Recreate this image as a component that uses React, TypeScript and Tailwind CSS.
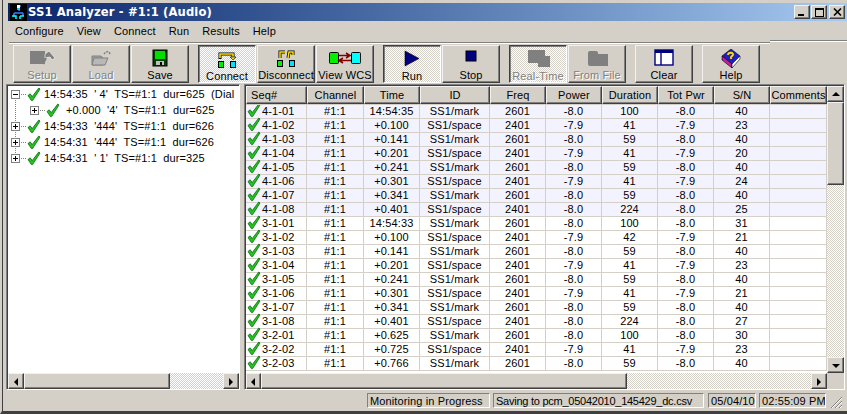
import React from "react";

const FONT = "font-['Liberation_Sans',sans-serif] tracking-[0.12px]";

type Row = [string, string, string, string, string, string, string, string, string];
const m = "SS1/mark", s = "SS1/space", f1 = "2601", f2 = "2401";
const rows: Row[] = [
  ["4-1-01", "14:54:35", m, f1, "-8.0", "100", "-8.0", "40", ""],
  ["4-1-02", "+0.100", s, f2, "-7.9", "41", "-7.9", "23", ""],
  ["4-1-03", "+0.141", m, f1, "-8.0", "59", "-8.0", "40", ""],
  ["4-1-04", "+0.201", s, f2, "-7.9", "41", "-7.9", "20", ""],
  ["4-1-05", "+0.241", m, f1, "-8.0", "59", "-8.0", "40", ""],
  ["4-1-06", "+0.301", s, f2, "-7.9", "41", "-7.9", "24", ""],
  ["4-1-07", "+0.341", m, f1, "-8.0", "59", "-8.0", "40", ""],
  ["4-1-08", "+0.401", s, f2, "-8.0", "224", "-8.0", "25", ""],
  ["3-1-01", "14:54:33", m, f1, "-8.0", "100", "-8.0", "31", ""],
  ["3-1-02", "+0.100", s, f2, "-7.9", "42", "-7.9", "21", ""],
  ["3-1-03", "+0.141", m, f1, "-8.0", "59", "-8.0", "40", ""],
  ["3-1-04", "+0.201", s, f2, "-7.9", "41", "-7.9", "23", ""],
  ["3-1-05", "+0.241", m, f1, "-8.0", "59", "-8.0", "40", ""],
  ["3-1-06", "+0.301", s, f2, "-7.9", "41", "-7.9", "21", ""],
  ["3-1-07", "+0.341", m, f1, "-8.0", "59", "-8.0", "40", ""],
  ["3-1-08", "+0.401", s, f2, "-8.0", "224", "-8.0", "27", ""],
  ["3-2-01", "+0.625", m, f1, "-8.0", "100", "-8.0", "30", ""],
  ["3-2-02", "+0.725", s, f2, "-7.9", "41", "-7.9", "23", ""],
  ["3-2-03", "+0.766", m, f1, "-8.0", "59", "-8.0", "40", ""],
];
const headers = ["Seq#", "Channel", "Time", "ID", "Freq", "Power", "Duration", "Tot Pwr", "S/N", "Comments"];
const COLS = "grid grid-cols-[61px_57px_56px_70px_56px_56px_56px_56px_56px_57px]";

function Check() {
  return (
    <svg width="14" height="15" viewBox="0 0 14 15" className="shrink-0 overflow-visible">
      <path d="M1 8.5 L3.2 6.8 L5.2 9.6 L11.8 1 L13 2 L5.6 13.6 L4.4 13.6 Z" fill="#22c51e" stroke="#0b6b12" strokeWidth="0.8" />
    </svg>
  );
}

function Tri({ dir }: { dir: "l" | "r" | "u" | "d" }) {
  const p = { l: "6,1 6,9 2,5", r: "2,1 2,9 6,5", u: "1,6 9,6 5,2", d: "1,3 9,3 5,7" }[dir];
  return (
    <svg width="9" height="9" viewBox="0 0 9 9"><polygon points={p} fill="#000" /></svg>
  );
}

const RAISED = "bg-[#d4d0c8] border border-t-[#f4f2ee] border-l-[#f4f2ee] border-r-[#404040] border-b-[#404040] shadow-[inset_-1px_-1px_0_#808080]";
const DITHER = "bg-[repeating-conic-gradient(#ffffff_0_25%,#d4d0c8_0_50%)] bg-[length:2px_2px]";

function SBtn({ dir, cls }: { dir: "l" | "r" | "u" | "d"; cls: string }) {
  return <div className={`${RAISED} ${cls} shrink-0 flex items-center justify-center`}><Tri dir={dir} /></div>;
}

function TButton({ label, pressed, disabled, children }: { label: string; pressed?: boolean; disabled?: boolean; children: React.ReactNode }) {
  const base = pressed
    ? `${DITHER} border border-t-[#404040] border-l-[#404040] border-r-white border-b-white shadow-[inset_1px_1px_0_#808080]`
    : RAISED;
  const txt = disabled ? "text-[#808080] [text-shadow:1px_1px_0_#ffffff]" : "text-black";
  return (
    <div className={`${base} w-[58px] h-[38px] shrink-0 flex flex-col items-center ${pressed ? "pt-[4px]" : "pt-[3px]"}`}>
      <div className="h-[19px] flex items-center justify-center">{children}</div>
      <div className={`text-[11px] leading-[14px] whitespace-nowrap ${txt}`}>{label}</div>
    </div>
  );
}

const Ic = ({ children, w = 30 }: { children: React.ReactNode; w?: number }) => (
  <svg width={w} height="20" viewBox={`0 0 ${w} 20`}>{children}</svg>
);

const Group = ({ children, cls = "" }: { children: React.ReactNode; cls?: string }) => (
  <div className={`flex gap-px ${cls}`}>{children}</div>
);

function TreeLine({ level, expander, first, last }: { level: 0 | 1; expander: boolean; first?: boolean; last?: boolean }) {
  const w = level === 0 ? 18 : 37;
  const bx = level === 0 ? 2 : 21;
  return (
    <svg width={w} height="16" viewBox={`0 0 ${w} 16`} className="shrink-0">
      <line x1="6.5" y1={first ? 8 : 0} x2="6.5" y2={last ? 8 : 16} stroke="#808080" strokeDasharray="1 1" />
      {level === 1 && <line x1="29" y1="8.5" x2={w} y2="8.5" stroke="#808080" strokeDasharray="1 1" />}
      {level === 0 && <line x1="10" y1="8.5" x2={w} y2="8.5" stroke="#808080" strokeDasharray="1 1" />}
      <rect x={bx + 0.5} y="4.5" width="8" height="8" fill="#fff" stroke="#808080" />
      <line x1={bx + 2} y1="8.5" x2={bx + 7} y2="8.5" stroke="#000" />
      {expander && <line x1={bx + 4.5} y1="6" x2={bx + 4.5} y2="11" stroke="#000" />}
    </svg>
  );
}

function TreeRow({ text, level = 0, expander = true, first, last }: { text: string; level?: 0 | 1; expander?: boolean; first?: boolean; last?: boolean }) {
  return (
    <div className="h-[16px] flex items-center whitespace-pre overflow-hidden">
      <TreeLine level={level} expander={expander} first={first} last={last} />
      <Check />
      <span className={`${level === 0 ? "ml-[3px]" : "ml-[6px]"} text-[11px] leading-[16px]`}>{text}</span>
    </div>
  );
}

export default function App() {
  return (
    <div className={`${FONT} w-[847px] h-[414px] overflow-hidden bg-[#d4d0c8] text-black border-l-[2px] border-b-[3px] border-l-[#d4d0c8] border-b-[#404040]`}>
      <div className="h-full border-l border-[#404040] flex flex-col">
        {/* Title bar */}
        <div className="mt-[3px] ml-[5px] h-[18px] shrink-0 flex items-center bg-gradient-to-r from-[#0a246a] to-[#a6caf0]">
          <svg width="17" height="17" viewBox="0 0 17 17" className="ml-[2px] shrink-0">
            <rect width="17" height="17" fill="#000" />
            <path d="M8 2h3M9 2v5M4 9h9M4 9v4M13 9v3" stroke="#3a7bff" strokeWidth="1.5" fill="none" />
            <path d="M2 12h4v3M10 12h4M10 12v3M7 5h3" stroke="#00ffff" strokeWidth="1.5" fill="none" />
            <rect x="7" y="1" width="3" height="3" fill="#fff" />
          </svg>
          <span className="ml-[1px] text-white font-['DejaVu_Sans',sans-serif] font-bold text-[11.6px] leading-[18px] whitespace-nowrap">SS1 Analyzer - #1:1 (Audio)</span>
          <div className="ml-auto mr-[2px] flex items-center">
            <div className={`${RAISED} w-[16px] h-[14px] relative`}><div className="absolute left-[3px] bottom-[2px] w-[6px] h-[2px] bg-black" /></div>
            <div className={`${RAISED} w-[16px] h-[14px] ml-px flex items-center justify-center`}><div className="w-[9px] h-[9px] border border-black border-t-2" /></div>
            <div className={`${RAISED} w-[16px] h-[14px] ml-[2px] flex items-center justify-center`}>
              <svg width="9" height="8" viewBox="0 0 9 8"><path d="M1 0.5L8 7.5M8 0.5L1 7.5" stroke="#000" strokeWidth="1.6" /></svg>
            </div>
          </div>
        </div>

        {/* Menu */}
        <div className="h-[21px] shrink-0 ml-[12px] flex items-center gap-[13px] text-[11px] leading-[21px]">
          {["Configure", "View", "Connect", "Run", "Results", "Help"].map((t) => (
            <span key={t}>{t}</span>
          ))}
        </div>

        {/* Toolbar */}
        <div className="h-[42px] shrink-0 flex items-start">
          <div className="ml-[6px] w-[761px] h-[42px] border-t border-[#808080] shadow-[inset_0_1px_0_#ffffff] pt-[1px] pl-[4px] flex gap-[9px]">
            <div className="flex gap-[9px] mt-px">
              <Group>
                <TButton label="Setup" disabled>
                  <Ic><path d="M3 2h15v13H3z" fill="#808080" /><path d="M18 5l4-3 6 7-3 2-2-3-5 1z" fill="#808080" stroke="#fff" strokeWidth="0.6" /><path d="M19 9l-3 6" stroke="#808080" strokeWidth="2" /></Ic>
                </TButton>
                <TButton label="Load" disabled>
                  <Ic><path d="M6 7h9l2 2v7H6z" fill="#a0a0a0" stroke="#808080" /><path d="M8 9h14l-3 7H6z" fill="#b8b8b8" stroke="#808080" /><path d="M18 5c2-3 5-3 6 0" stroke="#808080" fill="none" strokeWidth="1.5" strokeDasharray="2 1" /></Ic>
                </TButton>
                <TButton label="Save">
                  <Ic w={20}><rect x="3" y="1" width="14" height="16" fill="#004000" stroke="#000" /><rect x="5" y="2" width="10" height="8" fill="#00e000" /><rect x="6" y="12" width="8" height="4" fill="#c0c0c0" /><rect x="10" y="13" width="2" height="3" fill="#000" /></Ic>
                </TButton>
              </Group>
              <Group>
                <TButton label="Connect" pressed>
                  <Ic>
                    <path d="M8 9V4h13v3" fill="none" stroke="#000" strokeWidth="3" /><path d="M8 8V4h13v3" fill="none" stroke="#ffe000" strokeWidth="1.6" />
                    <polygon points="18,7 24,7 21,10" fill="#ffe000" stroke="#000" strokeWidth="0.6" />
                    <rect x="6.5" y="11.5" width="5" height="6" fill="#00f000" stroke="#000" /><rect x="18.5" y="11.5" width="5" height="6" fill="#00e0ff" stroke="#000" />
                  </Ic>
                </TButton>
                <TButton label="Disconnect">
                  <Ic>
                    <path d="M9 9V3h5M17 9l1-6h4v3" fill="none" stroke="#000" strokeWidth="3" /><path d="M9 9V3h5M17 9l1-6h4v3" fill="none" stroke="#ffe000" strokeWidth="1.5" />
                    <rect x="6.5" y="11.5" width="5" height="6" fill="#00f000" stroke="#000" /><rect x="18.5" y="11.5" width="5" height="6" fill="#00e0ff" stroke="#000" />
                  </Ic>
                </TButton>
                <TButton label="View WCS">
                  <Ic w={34}>
                    <rect x="1.5" y="3.5" width="9" height="11" rx="1" fill="#00f000" stroke="#000" />
                    <rect x="23.5" y="3.5" width="9" height="11" rx="1" fill="#00ffff" stroke="#000" />
                    <path d="M11 6.5h11M18 4l4 2.5-4 2.5M23 11.5H12M15 9l-4 2.5 4 2.5" fill="none" stroke="#800000" strokeWidth="1.5" />
                  </Ic>
                </TButton>
              </Group>
              <Group>
                <TButton label="Run" pressed>
                  <Ic w={16}><polygon points="1,1 15,8.5 1,16" fill="#000080" stroke="#000" strokeWidth="0.6" /></Ic>
                </TButton>
                <TButton label="Stop">
                  <Ic w={14}><rect x="2" y="2" width="10" height="10" fill="#000080" stroke="#000" /></Ic>
                </TButton>
              </Group>
              <Group>
                <TButton label="Real-Time" pressed disabled>
                  <Ic w={26}><rect x="3" y="0" width="17" height="13" fill="#808080" /><rect x="13" y="6" width="12" height="11" fill="#808080" /></Ic>
                </TButton>
                <TButton label="From File" disabled>
                  <Ic w={26}><rect x="4" y="2" width="10" height="15" rx="2" fill="#808080" /><rect x="12" y="5" width="12" height="12" fill="#808080" /></Ic>
                </TButton>
              </Group>
              <TButton label="Clear">
                <Ic w={20}><rect x="1" y="1" width="18" height="15" fill="#fff" stroke="#000080" strokeWidth="1.4" /><rect x="1" y="1" width="18" height="3" fill="#000080" /><line x1="7" y1="4" x2="7" y2="16" stroke="#000080" strokeWidth="1.4" /></Ic>
              </TButton>
              <TButton label="Help">
                <Ic w={20}>
                  <polygon points="1,7 10,0 19,7 11,15" fill="#2020c0" stroke="#000" strokeWidth="0.6" />
                  <polygon points="1,7 11,15 11,19 1,11" fill="#c020a0" stroke="#000" strokeWidth="0.6" />
                  <polygon points="11,15 19,7 19,10 11,19" fill="#fff" stroke="#000" strokeWidth="0.6" />
                  <path d="M7 6c0-3 6-3 5 0l-2 2v2" fill="none" stroke="#ffe000" strokeWidth="1.8" />
                </Ic>
              </TButton>
            </div>
          </div>
          <div className="flex-1 -mt-[2px] border-t border-[#808080] shadow-[inset_0_1px_0_#ffffff] h-[2px]" />
        </div>

        {/* Panes */}
        <div className="h-[306px] shrink-0 flex">
          {/* Tree */}
          <div className="ml-[3px] w-[234px] border border-t-[#808080] border-l-[#808080] border-r-white border-b-white shadow-[inset_1px_1px_0_#404040] pt-px pl-px flex flex-col bg-white">
            <div className="flex-1 overflow-hidden pl-px">
              <TreeRow text="14:54:35  ' 4'  TS=#1:1  dur=625  (Dial" expander={false} first />
              <TreeRow text="+0.000  '4'  TS=#1:1  dur=625" level={1} />
              <TreeRow text="14:54:33  '444'  TS=#1:1  dur=626" />
              <TreeRow text="14:54:31  '444'  TS=#1:1  dur=626" />
              <TreeRow text="14:54:31  ' 1'  TS=#1:1  dur=325" last />
            </div>
            <div className="h-[16px] shrink-0 flex">
              <SBtn dir="l" cls="w-[16px]" />
              <div className={`${RAISED} w-[146px]`} />
              <div className={`${DITHER} flex-1`} />
              <SBtn dir="r" cls="w-[16px]" />
            </div>
          </div>

          {/* List */}
          <div className="ml-[4px] w-[601px] border border-t-[#808080] border-l-[#808080] border-r-white border-b-white shadow-[inset_1px_1px_0_#404040] pt-px pl-px flex bg-white">
            <div className="w-[581px] shrink-0 flex flex-col">
              <div className="h-[19px] shrink-0 bg-[#d4d0c8]">
                <div className={COLS}>
                  {headers.map((h) => (
                    <div key={h} className={`${RAISED} h-[18px] text-center text-[11px] leading-[16px] overflow-hidden whitespace-nowrap ${h === "Seq#" ? "text-left pl-[4px]" : ""}`}>{h}</div>
                  ))}
                </div>
              </div>
              <div className="flex-1 overflow-hidden">
                {rows.map((r, i) => (
                  <div key={r[0]} className={`${COLS} h-[14px] ${i < 8 ? "bg-[#f3f3ff]" : "bg-white"} border-b border-[#d4d0c8] text-[11px] leading-[13px]`}>
                    <div className="border-r border-[#d4d0c8] flex items-center gap-px pl-px whitespace-nowrap">
                      <span className="-mt-[3px] -mb-[1px] relative"><Check /></span>
                      <span>{r[0]}</span>
                    </div>
                    <div className="border-r border-[#d4d0c8] text-center">#1:1</div>
                    {r.slice(1, 9).map((c, j) => (
                      <div key={j} className="border-r border-[#d4d0c8] text-center whitespace-nowrap">{c}</div>
                    ))}
                  </div>
                ))}
              </div>
              <div className="h-[16px] shrink-0 flex">
                <SBtn dir="l" cls="w-[15px]" />
                <div className={`${RAISED} w-[366px]`} />
                <div className={`${DITHER} flex-1`} />
                <SBtn dir="r" cls="w-[16px]" />
              </div>
            </div>
            <div className="flex-1 flex flex-col">
              <SBtn dir="u" cls="h-[16px]" />
              <div className={`${RAISED} h-[83px] shrink-0`} />
              <div className={`${DITHER} flex-1`} />
              <SBtn dir="d" cls="h-[16px]" />
              <div className="h-[16px] shrink-0 bg-[#d4d0c8]" />
            </div>
          </div>
        </div>

        {/* Status bar */}
        <div className="h-[21px] shrink-0 pt-[3px] flex items-start text-[11px] leading-[14px]">
          <div className="ml-[364px] w-[123px] h-[15px] border border-t-[#808080] border-l-[#808080] border-r-white border-b-white pl-[2px] whitespace-nowrap overflow-hidden">Monitoring in Progress</div>
          <div className="ml-[3px] w-[211px] h-[15px] border border-t-[#808080] border-l-[#808080] border-r-white border-b-white pl-[2px] whitespace-nowrap overflow-hidden tracking-[-0.25px]">Saving to pcm_05042010_145429_dc.csv</div>
          <div className="ml-[4px] w-[48px] h-[15px] border border-t-[#808080] border-l-[#808080] border-r-white border-b-white pl-[2px] whitespace-nowrap overflow-hidden">05/04/10</div>
          <div className="ml-[3px] w-[67px] h-[15px] border border-t-[#808080] border-l-[#808080] border-r-white border-b-white pl-[2px] whitespace-nowrap overflow-hidden">02:55:09 PM</div>
          <svg width="13" height="13" viewBox="0 0 13 13" className="ml-[4px] mt-[3px]">
            <path d="M12 1L1 12M12 5L5 12M12 9L9 12" stroke="#808080" strokeWidth="1" />
            <path d="M12 2L2 12M12 6L6 12M12 10L10 12" stroke="#ffffff" strokeWidth="1" />
          </svg>
        </div>
      </div>
    </div>
  );
}
